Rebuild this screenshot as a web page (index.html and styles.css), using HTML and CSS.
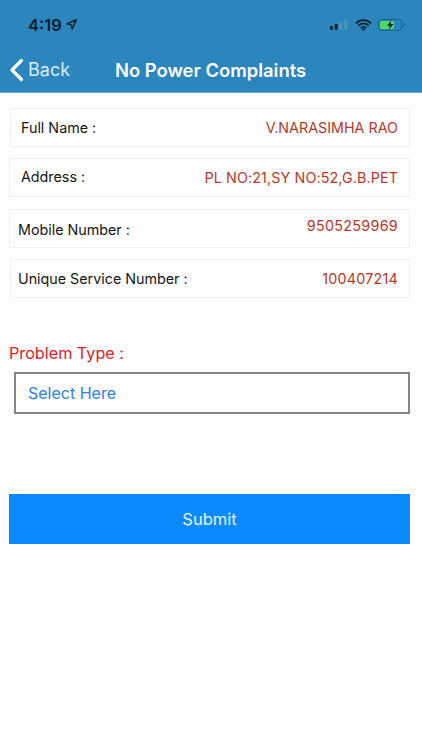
FILE: index.html
```html
<!DOCTYPE html>
<html lang="en">
<head>
    <meta charset="UTF-8">
    <meta name="viewport" content="width=device-width, initial-scale=1.0">
    <title>No Power Complaints</title>
    <link rel="stylesheet" href="styles.css">
</head>
<body>
    <header class="topbar">
        <div class="statusbar">
            <div class="status-left">
                <span class="clock">4:19</span>
                <svg class="locate" width="11" height="11" viewBox="0 0 10 10"><path d="M9.400.6 1 4.400l3.700.9.9 3.700z" fill="none" stroke="#10202c" stroke-width="1.300" stroke-linejoin="round"/></svg>
            </div>
            <div class="status-right">
                <svg width="19" height="11" viewBox="0 0 20 11">
                    <rect x="0" y="7" width="3" height="4" rx=".6" fill="#0c1c28"/>
                    <rect x="5" y="5" width="3" height="6" rx=".6" fill="#0c1c28"/>
                    <rect x="10" y="2.500" width="3" height="8.500" rx=".6" fill="#4f93bd"/>
                    <rect x="15" y="0" width="3" height="11" rx=".6" fill="#4f93bd"/>
                </svg>
                <svg width="17" height="12" viewBox="0 0 17 12">
                    <path d="M1 4.300a10.500 10.500 0 0 1 15 0M3.300 6.700a7.200 7.200 0 0 1 10.400 0M5.700 9a3.800 3.800 0 0 1 5.600 0" fill="none" stroke="#0c1c28" stroke-width="1.700"/>
                    <path d="M8.500 12 6.700 10a2.600 2.600 0 0 1 3.600 0z" fill="#0c1c28"/>
                </svg>
                <svg width="27" height="12" viewBox="0 0 27 12">
                    <rect x=".5" y=".5" width="23" height="11" rx="3" fill="none" stroke="#1d5f8a"/>
                    <rect x="2" y="2" width="14" height="8" rx="1.500" fill="#4cd964"/>
                    <path d="M25 4v4c.9-.3 1.400-1 1.400-2s-.5-1.700-1.400-2z" fill="#1d5f8a"/>
                    <path d="M13.500 1 9 6.800h3L10.700 11l4.800-6h-3z" fill="#0c1c28"/>
                </svg>
            </div>
        </div>
        <div class="navbar">
            <a class="back">
                <svg width="15" height="24" viewBox="0 0 15 24"><path d="M12.500 2.500 3 12l9.500 9.500" fill="none" stroke="#fff" stroke-width="3.200" stroke-linecap="round" stroke-linejoin="round"/></svg>
                <span>Back</span>
            </a>
            <h1>No Power Complaints</h1>
        </div>
    </header>

    <main class="content">
        <div class="info-row row-name">
            <span class="info-label">Full Name :</span>
            <span class="info-value">V.NARASIMHA RAO</span>
        </div>
        <div class="info-row row-address">
            <span class="info-label">Address :</span>
            <span class="info-value">PL NO:21,SY NO:52,G.B.PET</span>
        </div>
        <div class="info-row row-mobile">
            <span class="info-label">Mobile Number :</span>
            <span class="info-value">9505259969</span>
        </div>
        <div class="info-row row-service">
            <span class="info-label">Unique Service Number :</span>
            <span class="info-value">100407214</span>
        </div>

        <label class="problem-label">Problem Type :</label>
        <div class="select-box">Select Here</div>

        <button class="submit-btn">Submit</button>
    </main>
</body>
</html>
```

FILE: styles.css
```css
body {
    font-family: Inter, "Liberation Sans", sans-serif;
    margin: 0;
    padding: 0;
    background-color: #fff;
}

.topbar {
    height: 92px;
    background-color: #2a86bd;
    border-bottom: 1px solid #6fa9cd;
}

.statusbar {
    height: 47px;
    display: flex;
    justify-content: space-between;
    align-items: center;
    padding: 2px 17px 0 28px;
    box-sizing: border-box;
}

.status-left {
    display: flex;
    align-items: center;
    gap: 4px;
}

.clock {
    font-size: 16.500px;
    font-weight: 600;
    color: #10202c;
}

.status-right {
    display: flex;
    align-items: center;
    gap: 6px;
}

.navbar {
    display: flex;
    align-items: center;
    height: 45px;
    padding-left: 9px;
}

.back {
    display: flex;
    align-items: center;
    gap: 4px;
    width: 106px;
    font-size: 18px;
    color: #dcebf5;
}

h1 {
    margin: 0;
    font-size: 18.400px;
    font-weight: 600;
    color: #fff;
}

.content {
    padding: 15px 12px 0 9px;
}

.info-row {
    display: flex;
    justify-content: space-between;
    align-items: center;
    height: 37px;
    border: 1px solid #f0f0f0;
    font-size: 14.300px;
}

.info-label {
    color: #161616;
}

.info-value {
    color: #b8372b;
}

.row-name {
    margin: 0 0 11px 1px;
    padding: 0 11px 0 10px;
}

.row-address {
    margin-bottom: 12px;
    padding: 0 11px 0 11px;
}

.row-address .info-label {
    margin-bottom: 2px;
}

.row-address .info-value {
    letter-spacing: .12px;
}

.row-mobile {
    margin-bottom: 11px;
    padding: 0 11px 0 8px;
}

.row-mobile .info-value {
    margin-bottom: 6px;
    letter-spacing: .3px;
}

.row-mobile .info-label {
    margin-top: 2px;
}

.row-service {
    margin-left: 1px;
    padding: 0 11px 0 7px;
}

.row-service .info-value {
    letter-spacing: .22px;
}

.problem-label {
    display: block;
    margin-top: 45px;
    font-size: 16.200px;
    color: #e0201f;
}

.select-box {
    display: flex;
    align-items: center;
    height: 38px;
    margin: 9px 0 0 5px;
    padding-left: 12px;
    border: 2px solid #858585;
    font-size: 16px;
    color: #2c80e0;
}

.submit-btn {
    display: block;
    width: 401px;
    height: 50px;
    margin-top: 80px;
    border: none;
    background-color: #0a8afc;
    color: #e8f3ff;
    font-family: inherit;
    font-size: 16.500px;
}
```
